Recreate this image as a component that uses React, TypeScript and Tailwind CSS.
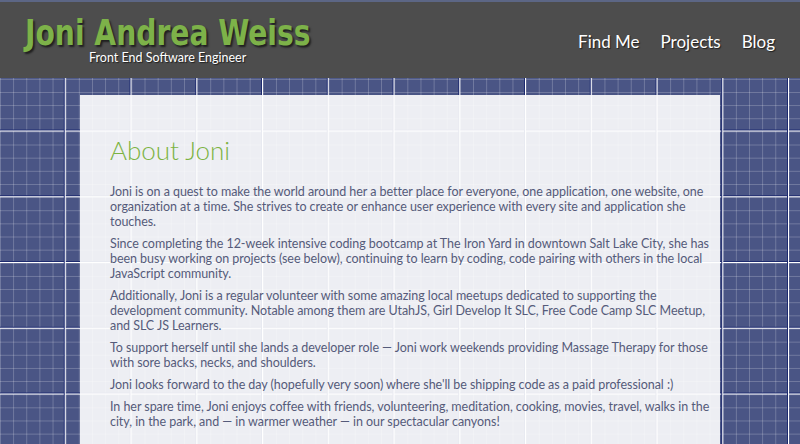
import React from "react";

const paragraphs = [
  "Joni is on a quest to make the world around her a better place for everyone, one application, one website, one organization at a time. She strives to create or enhance user experience with every site and application she touches.",
  "Since completing the 12-week intensive coding bootcamp at The Iron Yard in downtown Salt Lake City, she has been busy working on projects (see below), continuing to learn by coding, code pairing with others in the local JavaScript community.",
  "Additionally, Joni is a regular volunteer with some amazing local meetups dedicated to supporting the development community. Notable among them are UtahJS, Girl Develop It SLC, Free Code Camp SLC Meetup, and SLC JS Learners.",
  "To support herself until she lands a developer role \u2014 Joni work weekends providing Massage Therapy for those with sore backs, necks, and shoulders.",
  "Joni looks forward to the day (hopefully very soon) where she'll be shipping code as a paid professional :)",
  "In her spare time, Joni enjoys coffee with friends, volunteering, meditation, cooking, movies, travel, walks in the city, in the park, and \u2014 in warmer weather \u2014 in our spectacular canyons!",
];

export default function App() {
  return (
    <div className="relative h-[444px] w-[800px] overflow-hidden bg-[#4a5585] bg-[linear-gradient(90deg,transparent_63.75px,#1d2a70_63.75px,#1d2a70_64.75px,#ffffff_64.75px),linear-gradient(180deg,transparent_63.75px,#1d2a70_63.75px,#1d2a70_64.75px,#ffffff_64.75px),linear-gradient(90deg,rgba(255,255,255,0.22)_1px,transparent_1px),linear-gradient(180deg,rgba(255,255,255,0.22)_1px,transparent_1px)] bg-[size:65.75px_65.75px,65.75px_65.75px,13.15px_13.15px,13.15px_13.15px] font-['Lato','Open_Sans',sans-serif]">
      <header className="flex h-[78px] items-center justify-between border-t-2 border-[#5c6685] bg-[#4d4d4d] pl-[25px] pr-[25px]">
        <div className="flex flex-col">
          <h1 className="origin-left scale-x-[0.87] whitespace-nowrap font-['DejaVu_Sans_Condensed','DejaVu_Sans',sans-serif] text-[36px] font-bold leading-[34px] text-[#7db249] [text-shadow:2px_2px_2px_rgba(0,0,0,0.6)]">
            Joni Andrea Weiss
          </h1>
          <div className="ml-[64px] mt-[1px] text-[12.5px] leading-[14px] text-white [text-shadow:1px_1px_1px_rgba(0,0,0,0.6)]">
            Front End Software Engineer
          </div>
        </div>
        <nav className="mt-[3px] flex gap-[21px] text-[17px] text-white [text-shadow:1px_1px_1px_rgba(0,0,0,0.6)]">
          <a>Find Me</a>
          <a>Projects</a>
          <a>Blog</a>
        </nav>
      </header>
      <main className="ml-[80px] mt-[17px] h-[400px] w-[640px] bg-white/90 pl-[30px] pr-[10px] pt-[40px]">
        <h2 className="text-[26px] font-light leading-[30px] text-[#7cb342]">About Joni</h2>
        <div className="mt-[19px] text-[12.5px] leading-[15px] tracking-[-0.05px] text-[#555b7a]">
          {paragraphs.map((p, i) => (
            <p key={i} className="mb-[7px]">
              {p}
            </p>
          ))}
        </div>
      </main>
    </div>
  );
}
